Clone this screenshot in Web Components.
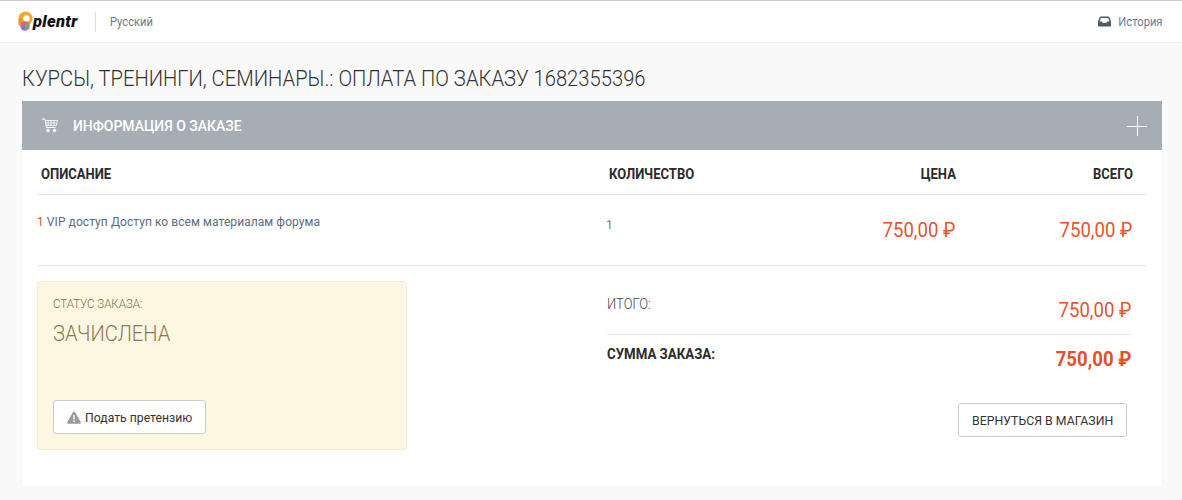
<!DOCTYPE html>
<html><head><meta charset="utf-8"><style>
html,body{margin:0;padding:0;background:#f9f9f9;font-family:Roboto,sans-serif;}
body{height:500px;overflow:hidden}
</style></head><body>
<app-header></app-header>
<order-page></order-page>
<script>
const def=(name,html)=>customElements.define(name,class extends HTMLElement{constructor(){super();this.attachShadow({mode:'open'}).innerHTML=html;}});
const narrow=`.x,.xr,.xc{display:inline-block;transform:scaleX(var(--k,.93));transform-origin:left center;white-space:nowrap}.xr{transform-origin:right center}.xc{transform-origin:center}`;
def('app-header',`<style>${narrow}
:host{display:flex;align-items:center;height:41px;border-top:1px solid #ccc;border-bottom:1px solid #eee;background:#fff;padding:0 20px 0 17px;}
.logo{display:flex;align-items:center;gap:0;width:62px}
.name{font:italic 900 16.5px Roboto,sans-serif;color:#111;letter-spacing:.3px}
.sep{width:1px;height:20px;background:#ddd;margin:0 14px 0 16px}
.lang{font-size:12px;color:#777;}
.hist{margin-left:auto;display:flex;align-items:center;gap:7px;font-size:12px;color:#6a7d96}
.hist .xr{margin-left:-3px}
svg{display:block}
</style>
<div class="logo"><svg width="16" height="21" viewBox="0 0 16 21"><circle cx="8.5" cy="7.5" r="7" fill="#f0a92c"/><circle cx="9.5" cy="7.5" r="3.2" fill="#fff"/><path d="M1.5 7.5V14l4 2V7.5z" fill="#e89a1f"/><circle cx="8" cy="15" r="4.8" fill="#c66bb0"/><circle cx="10.3" cy="14.8" r="2.2" fill="#5fb85a"/><circle cx="6.5" cy="17" r="2" fill="#4b8fd6"/><circle cx="7.5" cy="12.8" r="1.6" fill="#e8643c"/></svg><span class="name">plentr</span></div>
<div class="sep"></div><span class="lang x">Русский</span>
<div class="hist"><svg width="13" height="11" viewBox="0 0 13 11"><path d="M2.6 0.5h7.8a1 1 0 0 1 .9.6L13 5.6V9.4a1.2 1.2 0 0 1-1.2 1.2H1.2A1.2 1.2 0 0 1 0 9.4V5.6L1.7 1.1a1 1 0 0 1 .9-.6z" fill="#4f5a68"/><path d="M2.8 2h7.4l1.2 3.6H9l-.8 1.5H4.8L4 5.6H1.6z" fill="#fff"/></svg><span class="xr">История</span></div>`);
def('order-page',`<style>${narrow}
:host{display:block;padding:0 20px 0 22px}
h1{margin:0;font-weight:300;font-size:22px;line-height:30px;color:#333;padding-top:21px;height:36px;white-space:nowrap}
.bar{height:49px;background:#a6adb5;display:flex;align-items:center;color:#fff;padding:0 15px 0 20px;margin-top:1px}
.bar b{font-weight:500;font-size:15px;margin-left:15px}
.plus{margin-left:auto}
.card{background:#fff;padding:0 15px;height:336px}
.row{display:grid;grid-template-columns:572px 1fr 160px 177px}
.th{height:45px;box-sizing:border-box;padding-top:4px;border-bottom:1px solid #e8e8e8;align-items:center;font-weight:700;font-size:14px;color:#2b2b2b}
.th>*:first-child{padding-left:4px}
.r{text-align:right;padding-right:14px}
.item{height:70px;border-bottom:1px solid #e8e8e8;font-size:12px;color:#5d6b80}
.item .d{padding:20px 0 0 0;letter-spacing:.07px}
.num{color:#e4502d}
.q{padding-top:23px;color:#778;margin-left:-3px}
.p{font-weight:400;font-size:20px;line-height:24px;color:#e8532b;text-align:right;padding:23px 15px 0 0}
.bottom{display:grid;grid-template-columns:370px 1fr;padding-top:15px}
.status{height:169px;box-sizing:border-box;background:#fdf6e1;border:1px solid #f6edcf;border-radius:3px;padding:15px 15px;color:#8a7a55;display:flex;flex-direction:column;align-items:flex-start}
.st{font-size:12px;font-weight:300;color:#7a6d4e;line-height:14px;--k:.957}
.sv{font-weight:300;font-size:22px;line-height:26px;margin-top:10px;color:#8a7b55;--k:.914}
.btn{background:#fff;border:1px solid #ccc;border-radius:3px;font-weight:400;font-size:13px;color:#333;box-sizing:border-box;display:flex;align-items:center}
.claim{width:153px;height:34px;margin-top:auto;gap:4px;padding-left:13px;--k:.94}
.sum{padding-left:200px;padding-right:15px}
.l1{display:flex;justify-content:space-between;height:53px;border-bottom:1px solid #e8e8e8;align-items:center;font-weight:300;font-size:14px;color:#444}
.l1 .p{padding:5px 1px 0 0;}
.l1>span:first-child{margin-top:-8px}
.l2{display:flex;justify-content:space-between;align-items:center;height:48px;font-weight:700;font-size:14px;color:#2b2b2b}
.l2>span:first-child{margin-top:-11px;--k:.947}
.big{font-weight:700;font-size:20px;color:#e4502d;margin-right:1px}
.back{width:169px;height:34px;margin:20px 5px 0 auto;font-size:13px;justify-content:center;--k:.946}
</style>
<h1><span class="x" style="--k:.918">КУРСЫ, ТРЕНИНГИ, СЕМИНАРЫ.: ОПЛАТА ПО ЗАКАЗУ 1682355396</span></h1>
<div class="bar"><svg width="16" height="15" viewBox="0 0 16 15" fill="none" stroke="#fff"><path d="M0 1h3l1.5 8.5h9"/><path d="M3.5 2.5H15.5L14.5 7.5H4.3M6 2.5V7.5M9 2.5V7.5M12 2.5V7.5M3.8 5h11.2" stroke-width=".8"/><circle cx="6" cy="12.5" r="1.3" fill="#fff"/><circle cx="12.5" cy="12.5" r="1.3" fill="#fff"/></svg><b class="x">ИНФОРМАЦИЯ О ЗАКАЗЕ</b><svg class="plus" width="20" height="20" viewBox="0 0 20 20" stroke="#fff"><path d="M0 10.5h20M10.5 0v20"/></svg></div>
<div class="card">
<div class="row th"><span><span class="x">ОПИСАНИЕ</span></span><span><span class="x">КОЛИЧЕСТВО</span></span><span class="r"><span class="xr">ЦЕНА</span></span><span class="r"><span class="xr">ВСЕГО</span></span></div>
<div class="row item"><span class="d"><span class="num">1</span> VIP доступ Доступ ко всем материалам форума</span><span class="q">1</span><span class="p"><span class="xr">750,00 ₽</span></span><span class="p"><span class="xr">750,00 ₽</span></span></div>
<div class="bottom">
<div class="status"><span class="st x">СТАТУС ЗАКАЗА:</span><span class="sv x">ЗАЧИСЛЕНА</span><div class="btn claim"><svg width="14" height="13" viewBox="0 0 14 13"><path d="M7 0.5a1 1 0 0 1 .9.5l5.9 10.3a1 1 0 0 1-.9 1.5H1.1a1 1 0 0 1-.9-1.5L6.1 1A1 1 0 0 1 7 .5z" fill="#999"/><path d="M6.2 4h1.6l-.2 4.5H6.4zM6.2 9.5h1.6v1.6H6.2z" fill="#fff"/></svg><span class="x">Подать претензию</span></div></div>
<div class="sum"><div class="l1"><span class="x">ИТОГО:</span><span class="p"><span class="xr">750,00 ₽</span></span></div><div class="l2"><span class="x">СУММА ЗАКАЗА:</span><span class="big xr">750,00 ₽</span></div><div class="btn back"><span class="xc">ВЕРНУТЬСЯ В МАГАЗИН</span></div></div>
</div></div>`);
</script></body></html>
